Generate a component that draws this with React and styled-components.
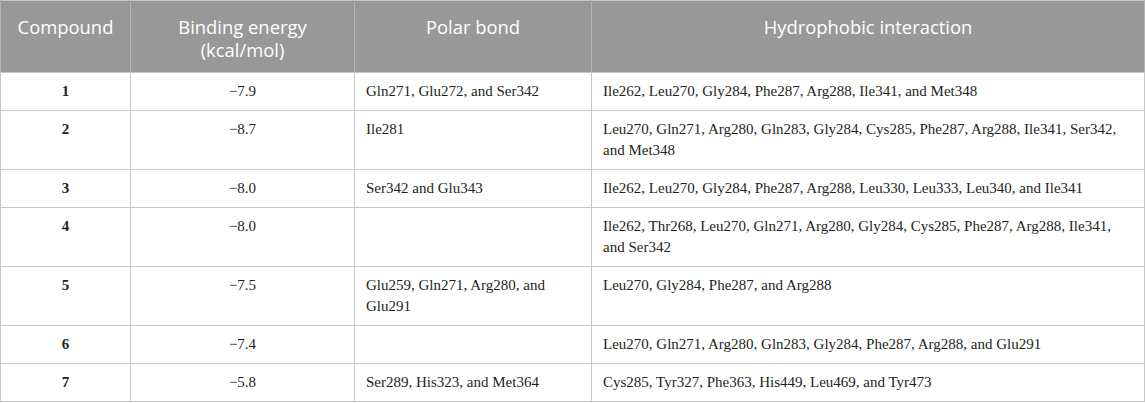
import styled, { createGlobalStyle } from "styled-components";

const GlobalStyle = createGlobalStyle`
  html, body {
    margin: 0;
    padding: 0;
    background: #ffffff;
  }
`;

const Table = styled.table`
  width: 1145px;
  border-collapse: collapse;
  table-layout: fixed;
  border: 1px solid #c8c8c8;
  font-family: "Liberation Serif", "Times New Roman", serif;
  color: #231f20;
`;

const HeadCell = styled.th`
  background: #989898;
  color: #ffffff;
  font-family: "Open Sans", "Noto Sans", sans-serif;
  font-weight: 400;
  font-size: 18.4px;
  line-height: 23px;
  text-align: center;
  vertical-align: top;
  padding: 14px 8px 11px;
  height: 46px;
  border-left: 1px solid #b4b4b4;
  border-right: 1px solid #b4b4b4;
  border-bottom: 1px solid #c8c8c8;
`;

const HeadLine = styled.span`
  display: block;
`;

const Cell = styled.td`
  font-size: 15px;
  line-height: 21px;
  vertical-align: top;
  padding: 8px 11px;
  text-align: ${(p) => (p.$center ? "center" : "left")};
  font-weight: ${(p) => (p.$bold ? 700 : 400)};
  border: 1px solid #c8c8c8;
`;

const rows = [
  {
    id: "1",
    energy: "−7.9",
    polar: "Gln271, Glu272, and Ser342",
    hydro: "Ile262, Leu270, Gly284, Phe287, Arg288, Ile341, and Met348",
  },
  {
    id: "2",
    energy: "−8.7",
    polar: "Ile281",
    hydro:
      "Leu270, Gln271, Arg280, Gln283, Gly284, Cys285, Phe287, Arg288, Ile341, Ser342, and Met348",
  },
  {
    id: "3",
    energy: "−8.0",
    polar: "Ser342 and Glu343",
    hydro:
      "Ile262, Leu270, Gly284, Phe287, Arg288, Leu330, Leu333, Leu340, and Ile341",
  },
  {
    id: "4",
    energy: "−8.0",
    polar: "",
    hydro:
      "Ile262, Thr268, Leu270, Gln271, Arg280, Gly284, Cys285, Phe287, Arg288, Ile341, and Ser342",
  },
  {
    id: "5",
    energy: "−7.5",
    polar: "Glu259, Gln271, Arg280, and Glu291",
    hydro: "Leu270, Gly284, Phe287, and Arg288",
  },
  {
    id: "6",
    energy: "−7.4",
    polar: "",
    hydro:
      "Leu270, Gln271, Arg280, Gln283, Gly284, Phe287, Arg288, and Glu291",
  },
  {
    id: "7",
    energy: "−5.8",
    polar: "Ser289, His323, and Met364",
    hydro: "Cys285, Tyr327, Phe363, His449, Leu469, and Tyr473",
  },
];

const App = () => {
  return (
    <>
      <GlobalStyle />
      <Table>
        <colgroup>
          <col style={{ width: 130 }} />
          <col style={{ width: 224 }} />
          <col style={{ width: 237 }} />
          <col />
        </colgroup>
        <thead>
          <tr>
            <HeadCell>Compound</HeadCell>
            <HeadCell>
              <HeadLine>Binding energy</HeadLine>
              <HeadLine>(kcal/mol)</HeadLine>
            </HeadCell>
            <HeadCell>Polar bond</HeadCell>
            <HeadCell>Hydrophobic interaction</HeadCell>
          </tr>
        </thead>
        <tbody>
          {rows.map((r) => (
            <tr key={r.id}>
              <Cell $center $bold>
                {r.id}
              </Cell>
              <Cell $center>{r.energy}</Cell>
              <Cell>{r.polar}</Cell>
              <Cell>{r.hydro}</Cell>
            </tr>
          ))}
        </tbody>
      </Table>
    </>
  );
};

export default App;
